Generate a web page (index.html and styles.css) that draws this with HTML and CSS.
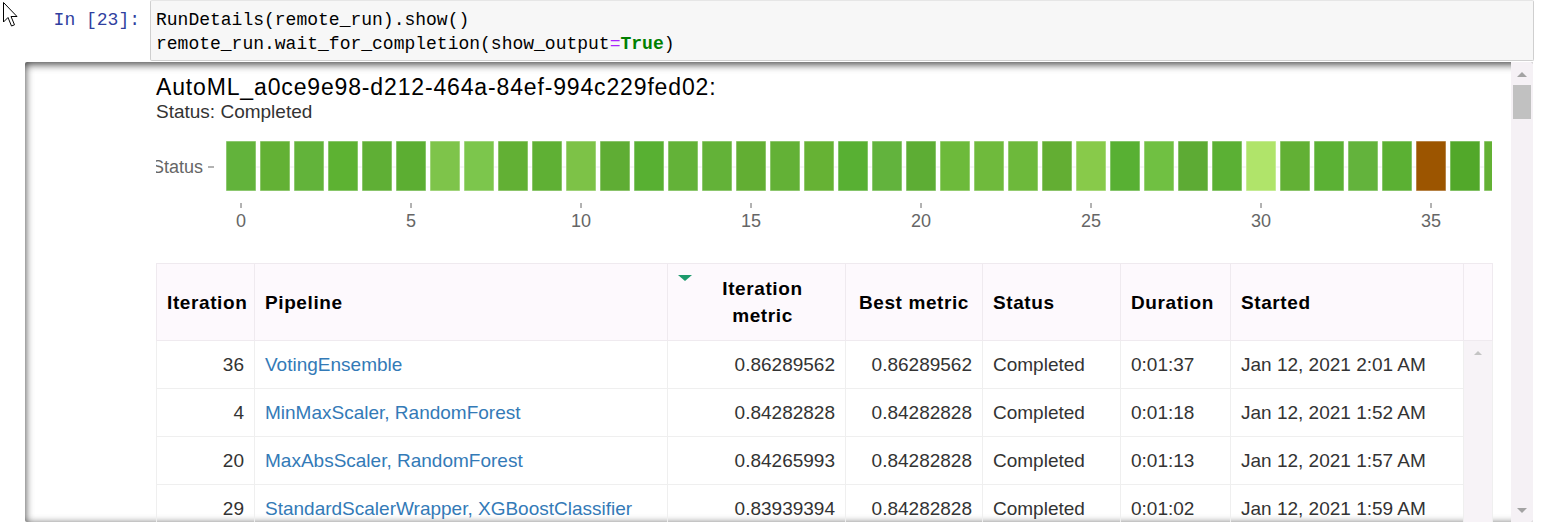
FILE: index.html
```html
<!DOCTYPE html>
<html>
<head>
<meta charset="utf-8">
<link rel="stylesheet" href="styles.css">
</head>
<body>
<div class="cell">
  <div class="input">
    <div class="prompt">In&nbsp;[23]:</div>
    <div class="code">
      <div class="code-line">RunDetails(remote_run).show()</div>
      <div class="code-line">remote_run.wait_for_completion(show_output<span class="op">=</span><span class="kw">True</span>)</div>
    </div>
  </div>
  <div class="output">
    <div class="out-content">
      <div class="run-title">AutoML_a0ce9e98-d212-464a-84ef-994c229fed02:</div>
      <div class="run-status">Status: Completed</div>
      <svg class="chart" width="1336" height="100" viewBox="0 0 1336 100">
        <line x1="70" y1="32" x2="1336" y2="32" class="grid"/>
        <text x="47" y="38" class="axis-text" text-anchor="end">Status</text>
        <line x1="52" y1="32" x2="58" y2="32" class="tick"/>
        <g class="bars">
          <rect x="70" y="6" width="30" height="50" fill="#62b33b"/>
          <rect x="104" y="6" width="30" height="50" fill="#63b135"/>
          <rect x="138" y="6" width="30" height="50" fill="#62b33a"/>
          <rect x="172" y="6" width="30" height="50" fill="#5db232"/>
          <rect x="206" y="6" width="30" height="50" fill="#5faf35"/>
          <rect x="240" y="6" width="30" height="50" fill="#5cae32"/>
          <rect x="274" y="6" width="30" height="50" fill="#7ec44a"/>
          <rect x="308" y="6" width="30" height="50" fill="#7cc64c"/>
          <rect x="342" y="6" width="30" height="50" fill="#62b034"/>
          <rect x="376" y="6" width="30" height="50" fill="#5fb034"/>
          <rect x="410" y="6" width="30" height="50" fill="#7dc247"/>
          <rect x="444" y="6" width="30" height="50" fill="#5fad34"/>
          <rect x="478" y="6" width="30" height="50" fill="#58b032"/>
          <rect x="512" y="6" width="30" height="50" fill="#63b238"/>
          <rect x="546" y="6" width="30" height="50" fill="#63b238"/>
          <rect x="580" y="6" width="30" height="50" fill="#62ae33"/>
          <rect x="614" y="6" width="30" height="50" fill="#63b136"/>
          <rect x="648" y="6" width="30" height="50" fill="#66b234"/>
          <rect x="682" y="6" width="30" height="50" fill="#58b033"/>
          <rect x="716" y="6" width="30" height="50" fill="#62b33d"/>
          <rect x="750" y="6" width="30" height="50" fill="#5dad34"/>
          <rect x="784" y="6" width="30" height="50" fill="#6dba3b"/>
          <rect x="818" y="6" width="30" height="50" fill="#6fba3c"/>
          <rect x="852" y="6" width="30" height="50" fill="#6db93b"/>
          <rect x="886" y="6" width="30" height="50" fill="#63ae33"/>
          <rect x="920" y="6" width="30" height="50" fill="#88ca4a"/>
          <rect x="954" y="6" width="30" height="50" fill="#58b033"/>
          <rect x="988" y="6" width="30" height="50" fill="#70c042"/>
          <rect x="1022" y="6" width="30" height="50" fill="#5dab34"/>
          <rect x="1056" y="6" width="30" height="50" fill="#5bb034"/>
          <rect x="1090" y="6" width="30" height="50" fill="#b0e46a"/>
          <rect x="1124" y="6" width="30" height="50" fill="#62b035"/>
          <rect x="1158" y="6" width="30" height="50" fill="#5bb134"/>
          <rect x="1192" y="6" width="30" height="50" fill="#63b33c"/>
          <rect x="1226" y="6" width="30" height="50" fill="#5bb033"/>
          <rect x="1260" y="6" width="30" height="50" fill="#9c5500"/>
          <rect x="1294" y="6" width="30" height="50" fill="#52a82a"/>
          <rect x="1328" y="6" width="30" height="50" fill="#63b134"/>
        </g>
        <g class="xticks">
          <line x1="85" y1="68" x2="85" y2="73" class="tick"/>
          <line x1="255" y1="68" x2="255" y2="73" class="tick"/>
          <line x1="425" y1="68" x2="425" y2="73" class="tick"/>
          <line x1="595" y1="68" x2="595" y2="73" class="tick"/>
          <line x1="765" y1="68" x2="765" y2="73" class="tick"/>
          <line x1="935" y1="68" x2="935" y2="73" class="tick"/>
          <line x1="1105" y1="68" x2="1105" y2="73" class="tick"/>
          <line x1="1275" y1="68" x2="1275" y2="73" class="tick"/>
          <text x="85" y="92" class="axis-text" text-anchor="middle">0</text>
          <text x="255" y="92" class="axis-text" text-anchor="middle">5</text>
          <text x="425" y="92" class="axis-text" text-anchor="middle">10</text>
          <text x="595" y="92" class="axis-text" text-anchor="middle">15</text>
          <text x="765" y="92" class="axis-text" text-anchor="middle">20</text>
          <text x="935" y="92" class="axis-text" text-anchor="middle">25</text>
          <text x="1105" y="92" class="axis-text" text-anchor="middle">30</text>
          <text x="1275" y="92" class="axis-text" text-anchor="middle">35</text>
        </g>
      </svg>
      <table class="runs">
        <colgroup>
          <col class="c-iter"><col class="c-pipe"><col class="c-imet"><col class="c-bmet"><col class="c-stat"><col class="c-dur"><col class="c-start"><col class="c-scroll">
        </colgroup>
        <thead>
          <tr>
            <th class="left">Iteration</th>
            <th class="left">Pipeline</th>
            <th class="sorted"><span class="sort-arrow"></span>Iteration<br>metric</th>
            <th class="center">Best metric</th>
            <th class="left">Status</th>
            <th class="left">Duration</th>
            <th class="left">Started</th>
            <th class="scroll-head"></th>
          </tr>
        </thead>
        <tbody>
          <tr>
            <td class="num">36</td>
            <td><a class="link">VotingEnsemble</a></td>
            <td class="num">0.86289562</td>
            <td class="num">0.86289562</td>
            <td>Completed</td>
            <td>0:01:37</td>
            <td>Jan 12, 2021 2:01 AM</td>
            <td class="tscroll" rowspan="4"><div class="tscroll-inner"><span class="tri-up light"></span></div></td>
          </tr>
          <tr>
            <td class="num">4</td>
            <td><a class="link">MinMaxScaler, RandomForest</a></td>
            <td class="num">0.84282828</td>
            <td class="num">0.84282828</td>
            <td>Completed</td>
            <td>0:01:18</td>
            <td>Jan 12, 2021 1:52 AM</td>
          </tr>
          <tr>
            <td class="num">20</td>
            <td><a class="link">MaxAbsScaler, RandomForest</a></td>
            <td class="num">0.84265993</td>
            <td class="num">0.84282828</td>
            <td>Completed</td>
            <td>0:01:13</td>
            <td>Jan 12, 2021 1:57 AM</td>
          </tr>
          <tr>
            <td class="num">29</td>
            <td><a class="link">StandardScalerWrapper, XGBoostClassifier</a></td>
            <td class="num">0.83939394</td>
            <td class="num">0.84282828</td>
            <td>Completed</td>
            <td>0:01:02</td>
            <td>Jan 12, 2021 1:59 AM</td>
          </tr>
        </tbody>
      </table>
    </div>
    <div class="vscroll">
      <span class="tri-up"></span>
      <div class="thumb"></div>
      <div class="vscroll-fill"></div>
      <span class="tri-down"></span>
    </div>
  </div>
</div>
<svg class="cursor" width="22" height="30" viewBox="0 0 22 30">
  <path d="M3.5 2.5 L3.5 22 L8 17.5 L11.5 26 L14.5 24.8 L11 16.5 L17 16.5 Z" fill="#fff" stroke="#000" stroke-width="1" stroke-linejoin="miter"/>
</svg>
</body>
</html>
```

FILE: styles.css
```css
html, body {
  margin: 0;
  padding: 0;
  background: #fff;
}
body {
  width: 1547px;
  height: 530px;
  overflow: hidden;
  position: relative;
  font-family: "Liberation Sans", Arial, sans-serif;
  color: #333;
}
.cell {
  display: flex;
  flex-direction: column;
}
.input {
  display: flex;
  align-items: flex-start;
  height: 62px;
}
.prompt {
  width: 140px;
  padding-right: 10px;
  text-align: right;
  font-family: "Liberation Mono", "Courier New", monospace;
  font-size: 18px;
  line-height: 24px;
  padding-top: 8px;
  color: #303f9f;
  flex: none;
}
.code {
  width: 1384px;
  height: 61px;
  background: #f7f7f7;
  border: 1px solid #cfcfcf;
  border-top-color: #e6e6e6;
  border-radius: 2px;
  padding: 7px 0 0 5px;
  box-sizing: border-box;
  font-family: "Liberation Mono", "Courier New", monospace;
  font-size: 18px;
  line-height: 24px;
  color: #000;
  flex: none;
}
.code-line {
  white-space: pre;
  height: 24px;
}
.op { color: #aa22ff; }
.kw { color: #008000; font-weight: bold; }

.output {
  margin-left: 25px;
  width: 1508px;
  height: 460px;
  display: flex;
  box-shadow: inset 0 2px 8px rgba(0, 0, 0, 0.8);
  border-radius: 2px;
  overflow: hidden;
}
.out-content {
  flex: 1;
  padding: 12px 0 0 131px;
  overflow: hidden;
  min-width: 0;
}
.run-title {
  font-size: 23px;
  line-height: 26px;
  letter-spacing: 0.85px;
  color: #000;
  white-space: nowrap;
}
.run-status {
  font-size: 19px;
  line-height: 24px;
  color: #333;
}
.chart {
  display: block;
  margin-top: 11px;
  overflow: hidden;
}
.chart .grid { stroke: #ececec; stroke-width: 1; }
.chart .tick { stroke: #666; stroke-width: 1; }
.chart .bars rect { stroke: rgba(255, 255, 255, 0.55); stroke-width: 1; }
.axis-text {
  font-family: "Liberation Sans", Arial, sans-serif;
  font-size: 18px;
  fill: #666;
}

.runs {
  margin-top: 28px;
  width: 1336px;
  table-layout: fixed;
  border-collapse: collapse;
  font-size: 19px;
  color: #333;
}
.c-iter { width: 98px; }
.c-pipe { width: 413px; }
.c-imet { width: 178px; }
.c-bmet { width: 137px; }
.c-stat { width: 138px; }
.c-dur { width: 110px; }
.c-start { width: 233px; }
.c-scroll { width: 29px; }
.runs th {
  height: 76px;
  background: #fdf9fd;
  border: 1px solid #efeaef;
  color: #000;
  font-weight: bold;
  font-size: 19px;
  letter-spacing: 0.6px;
  line-height: 27px;
  padding: 0 10px;
  vertical-align: middle;
  position: relative;
}
.runs th.left { text-align: left; }
.runs th.center { text-align: center; }
.runs th.sorted { text-align: center; padding-left: 22px; }
.sort-arrow {
  position: absolute;
  left: 10px;
  top: 11px;
  width: 0;
  height: 0;
  border-left: 7px solid transparent;
  border-right: 7px solid transparent;
  border-top: 6px solid #1d9a6c;
}
.runs th.scroll-head { padding: 0; }
.runs td {
  height: 47px;
  border: 1px solid #efefef;
  padding: 0 10px;
  white-space: nowrap;
  overflow: hidden;
  vertical-align: middle;
}
.runs td.num { text-align: right; }
.link { color: #337ab7; text-decoration: none; }
.runs td.tscroll {
  padding: 0;
  background: #f7f3f7;
  vertical-align: top;
  border-bottom: none;
}
.tscroll-inner {
  display: flex;
  justify-content: center;
  padding-top: 10px;
}
.tri-up {
  width: 0;
  height: 0;
  border-left: 5px solid transparent;
  border-right: 5px solid transparent;
  border-bottom: 5px solid #a3a3a3;
}
.tri-up.light {
  border-left-width: 4px;
  border-right-width: 4px;
  border-bottom: 4px solid #c4c4c4;
}
.tri-down {
  width: 0;
  height: 0;
  border-left: 5px solid transparent;
  border-right: 5px solid transparent;
  border-top: 5px solid #a3a3a3;
}
.vscroll {
  width: 22px;
  flex: none;
  background: #f5f1f5;
  display: flex;
  flex-direction: column;
  align-items: center;
  padding: 10px 0 9px;
  box-sizing: border-box;
}
.thumb {
  margin-top: 8px;
  width: 18px;
  height: 34px;
  background: #c1c1c1;
}
.vscroll-fill { flex: 1; }
.cursor {
  position: absolute;
  left: 0;
  top: 0;
}
```
